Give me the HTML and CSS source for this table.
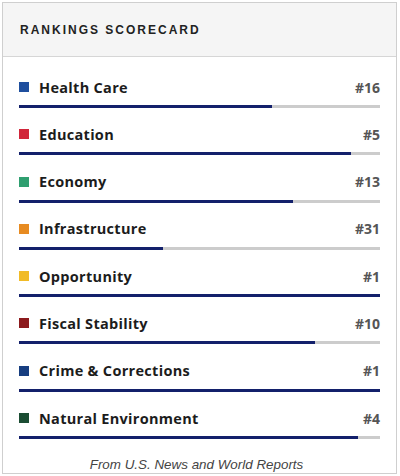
FILE: index.html
```html
<!DOCTYPE html>
<html>
<head>
<meta charset="utf-8">
<link rel="stylesheet" href="styles.css">
</head>
<body>
<div class="card">
  <div class="header"><h2 class="title">RANKINGS SCORECARD</h2></div>
  <ul class="list">
    <li class="row"><div class="line"><span class="sq c1"></span><span class="label">Health Care</span><span class="rank">#16</span></div><div class="bar"><div class="fill" style="width:70%"></div></div></li>
    <li class="row"><div class="line"><span class="sq c2"></span><span class="label">Education</span><span class="rank">#5</span></div><div class="bar"><div class="fill" style="width:92%"></div></div></li>
    <li class="row"><div class="line"><span class="sq c3"></span><span class="label">Economy</span><span class="rank">#13</span></div><div class="bar"><div class="fill" style="width:76%"></div></div></li>
    <li class="row"><div class="line"><span class="sq c4"></span><span class="label">Infrastructure</span><span class="rank">#31</span></div><div class="bar"><div class="fill" style="width:40%"></div></div></li>
    <li class="row"><div class="line"><span class="sq c5"></span><span class="label">Opportunity</span><span class="rank">#1</span></div><div class="bar"><div class="fill" style="width:100%"></div></div></li>
    <li class="row"><div class="line"><span class="sq c6"></span><span class="label">Fiscal Stability</span><span class="rank">#10</span></div><div class="bar"><div class="fill" style="width:82%"></div></div></li>
    <li class="row"><div class="line"><span class="sq c7"></span><span class="label">Crime &amp; Corrections</span><span class="rank">#1</span></div><div class="bar"><div class="fill" style="width:100%"></div></div></li>
    <li class="row"><div class="line"><span class="sq c8"></span><span class="label">Natural Environment</span><span class="rank">#4</span></div><div class="bar"><div class="fill" style="width:94%"></div></div></li>
  </ul>
  <p class="source">From U.S. News and World Reports</p>
</div>
</body>
</html>
```
FILE: styles.css
```css
html, body { margin: 0; padding: 0; background: #fff; }
body { width: 400px; height: 476px; overflow: hidden; }
.card {
  box-sizing: border-box;
  margin: 2px 0 0 2px;
  width: 395px;
  height: 472px;
  border: 1px solid #cfcfcf;
  background: #fff;
  display: flex;
  flex-direction: column;
}
.header {
  box-sizing: border-box;
  height: 54px;
  background: #f5f5f5;
  border-bottom: 1px solid #d6d6d6;
  display: flex;
  align-items: center;
  padding-left: 17px;
}
.title {
  margin: 0;
  font-family: "Liberation Sans", Arial, sans-serif;
  font-weight: bold;
  font-size: 12px;
  letter-spacing: 2px;
  color: #222;
}
.list {
  list-style: none;
  margin: 0;
  padding: 20px 16px 0 16px;
}
.row { padding-bottom: 16.3px; }
.line {
  display: flex;
  align-items: center;
  height: 20px;
  margin-bottom: 8px;
  font-family: "Open Sans", sans-serif;
  font-weight: 700;
  font-size: 14.5px;
}
.sq { width: 10px; height: 10px; margin-right: 10px; flex: none; }
.label { color: #1c1c1c; flex: 1; letter-spacing: 0.3px; }
.rank { color: #555; font-size: 14px; }
.bar { height: 3px; background: #cccccc; }
.fill { height: 3px; background: #13206b; }
.c1 { background: #1f4f9e; }
.c2 { background: #d1263a; }
.c3 { background: #2f9f70; }
.c4 { background: #e78b21; }
.c5 { background: #f1bb27; }
.c6 { background: #8c1a1d; }
.c7 { background: #173e80; }
.c8 { background: #1b4d33; }
.source {
  margin: 0;
  margin-top: auto;
  padding: 0 6px 1px 0;
  text-align: center;
  font-family: "Liberation Sans", Arial, sans-serif;
  font-style: italic;
  font-size: 13.4px;
  color: #444;
}
```
